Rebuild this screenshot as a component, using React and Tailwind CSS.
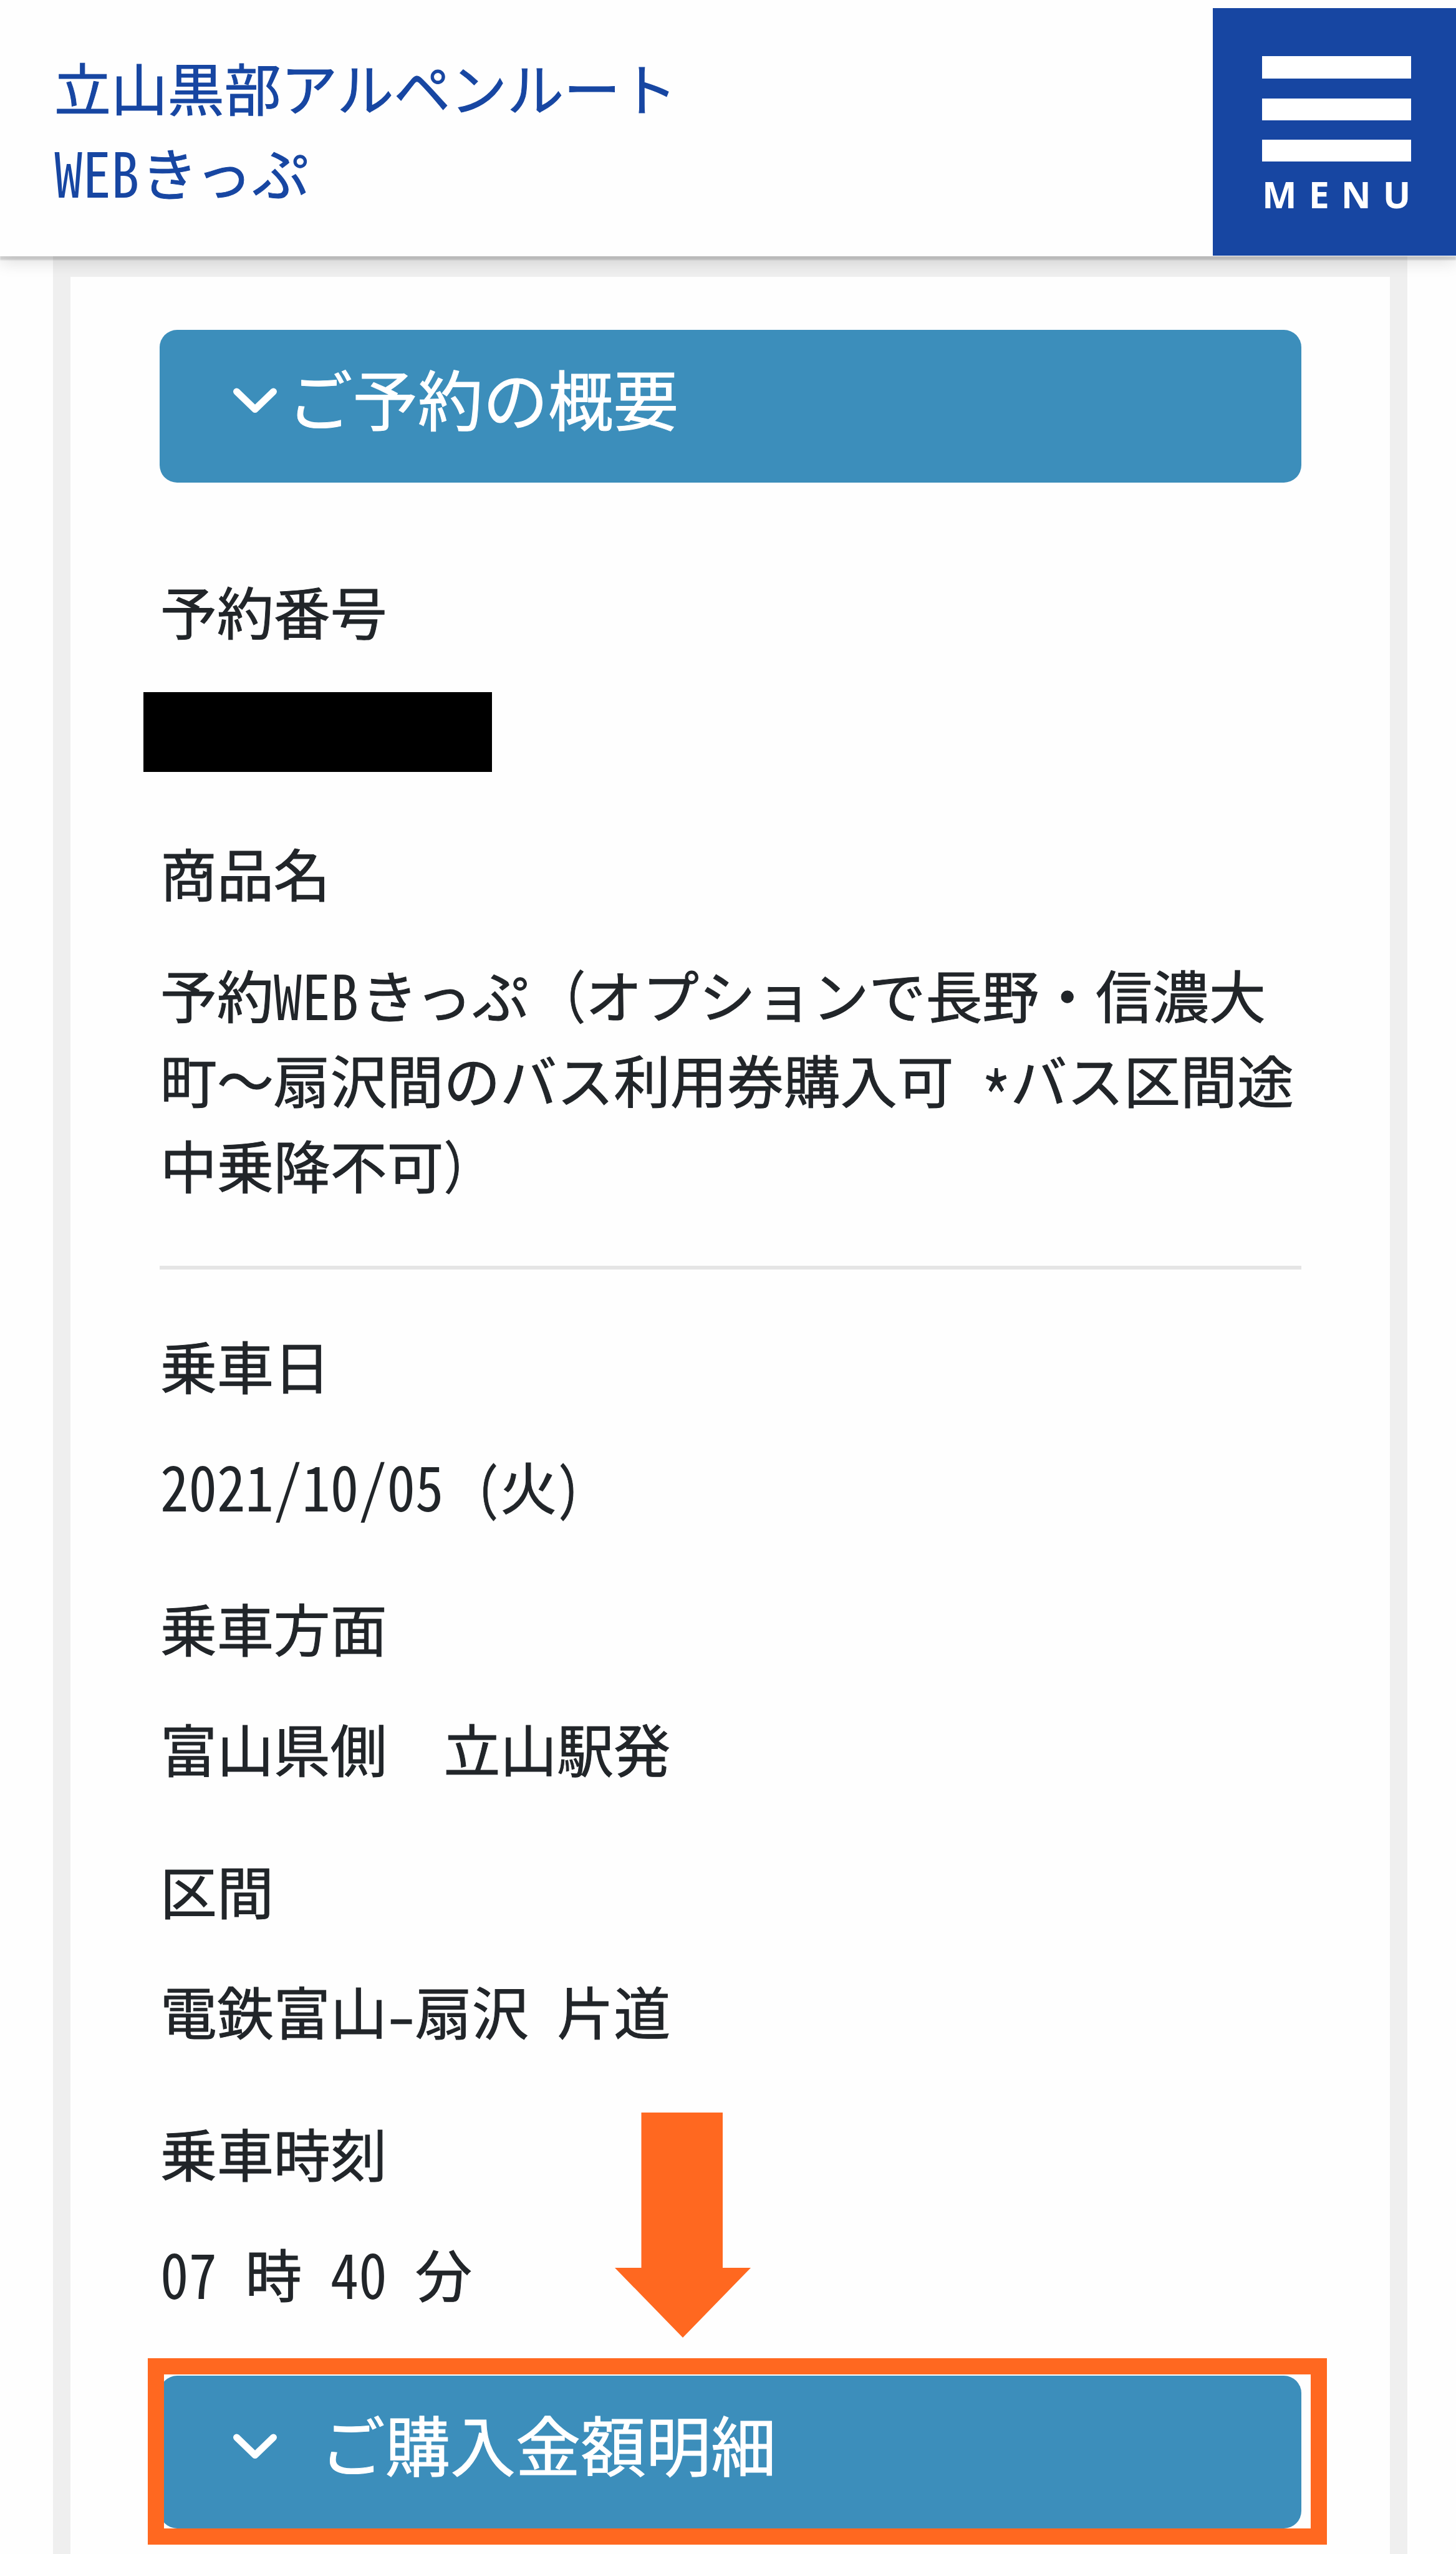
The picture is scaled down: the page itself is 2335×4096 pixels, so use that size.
const Half = ({ children }) => (
  <span className="relative top-[2px] inline-block origin-[50%_72%] scale-y-[1.1] whitespace-pre [-webkit-text-stroke:0px] [font-feature-settings:'hwid']">{children}</span>
);

const HalfOpen = () => (
  <span className="inline-block origin-[90%_50%] scale-x-[0.8] [font-feature-settings:'hwid']">(</span>
);

const HalfClose = () => (
  <span className="inline-block origin-[0%_50%] scale-x-[0.8] [font-feature-settings:'hwid']">)</span>
);

const Chevron = () => (
  <svg className="h-[42px] w-[72px] shrink-0" viewBox="0 0 72 42" fill="none" stroke="#fff" strokeWidth="11" strokeLinecap="round" strokeLinejoin="round">
    <path d="M6.5 7 L36 35.5 L65.5 7" />
  </svg>
);

const SectionBar = ({ children }) => (
  <div className="flex h-[245px] w-[1831px] items-start rounded-[28px] bg-[#3c8ebb] pl-[117px] text-[104.5px] leading-[157px] text-white">
    <div className="flex h-[226px] items-center">
      <Chevron />
    </div>
    <h2 className="ml-4 pt-[29px] whitespace-pre">{children}</h2>
  </div>
);

const Item = ({ label, children }) => (
  <div className="mb-[91.5px]">
    <dt className="mb-[56.6px]">{label}</dt>
    <dd>{children}</dd>
  </div>
);

const MenuButton = () => (
  <button className="flex h-[397px] w-[390px] flex-col items-start bg-[#1746a2] pl-[79px] pt-[77px]">
    <span className="mb-[32px] h-[36px] w-[239px] bg-white" />
    <span className="mb-[31px] h-[35px] w-[239px] bg-white" />
    <span className="h-[35px] w-[239px] bg-white" />
    <span className="mt-[13px] whitespace-nowrap font-['Open_Sans'] text-[59px] font-bold leading-[78px] tracking-[19px] text-white [-webkit-text-stroke:0px]">MENU</span>
  </button>
);

export default function App() {
  return (
    <div className="h-[4096px] w-[2335px] overflow-hidden bg-[#fefefe] font-['Noto_Sans_CJK_JP',sans-serif] text-[90.9px] leading-[136.4px] text-[#212529] [-webkit-text-stroke:1px_currentColor]" lang="ja">
      <header className="relative flex h-[411px] items-start justify-between bg-[#fefefe] pt-[13px] shadow-[0_6px_2px_rgba(0,0,0,0.14),0_8px_26px_rgba(0,0,0,0.14)]">
        <h1 className="pl-[87px] pt-[58px] text-[#1746a2]">
          立山黒部アルペンルート
          <br />
          <Half>WEB</Half>
          <span className="ml-[3px]">きっぷ</span>
        </h1>
        <MenuButton />
      </header>
      <main className="ml-[85px] h-[3800px] w-[2172px] border-x-[28px] border-t-[33px] border-[#efefef] pl-[143px] pt-[85px]">
        <SectionBar>ご予約の概要</SectionBar>
        <dl className="pt-[137px] pl-px">
          <div className="mb-[99px]">
            <dt className="mb-[63px]">予約番号</dt>
            <dd className="-ml-[27px] h-[128px] w-[559px] bg-black" />
          </div>
          <div className="-mt-[6px]">
            <dt className="mb-[58px]">商品名</dt>
            <dd className="whitespace-nowrap">
              予約<Half>WEB</Half>
              <span className="ml-1">きっぷ</span>
              <span className="inline-block origin-[100%_50%] scale-x-[0.85]">（</span>オプションで長野・信濃大
              <br />
              町～扇沢間のバス利用券購入可<Half> </Half>
              <span className="relative top-[4px] inline-block origin-[50%_60%] scale-x-[1.1] scale-y-[1.3]">
                <span className="relative top-[20px] [-webkit-text-stroke:0px] [font-feature-settings:'hwid']">*</span>
              </span>
              バス区間途
              <br />
              中乗降不可<span className="inline-block origin-[5%_50%] scale-x-[0.85]">）</span>
            </dd>
          </div>
          <hr className="-ml-px mb-[85px] mt-[95px] h-[6px] w-[1831px] border-0 bg-[#e5e5e5]" />
          <Item label="乗車日">
            <Half>2021/10/05 </Half>
            <HalfOpen />火<HalfClose />
          </Item>
          <Item label="乗車方面">富山県側　立山駅発</Item>
          <Item label="区間">
            電鉄富山<span className="relative top-[5px] inline-block scale-x-[1.25] [font-feature-settings:'hwid']">-</span>扇沢<Half> </Half>片道
          </Item>
          <div className="relative mb-[97px]">
            <dt className="mb-[56.6px]">乗車時刻</dt>
            <dd>
              <Half>07 </Half>時<Half> 40 </Half>分
            </dd>
            <svg className="absolute left-[729px] top-[4px] h-[362px] w-[218px]" viewBox="0 0 218 362">
              <path d="M42.5 0 H173 V249 H218 L109 361 L0 249 H42.5 Z" fill="#ff6820" />
            </svg>
          </div>
        </dl>
        <div className="relative">
          <SectionBar>
            <Half> </Half>ご購入金額明細
          </SectionBar>
          <div className="absolute -left-[19px] -top-[28px] h-[299px] w-[1891px] border-[26px] border-[#ff6820]" />
        </div>
      </main>
    </div>
  );
}
